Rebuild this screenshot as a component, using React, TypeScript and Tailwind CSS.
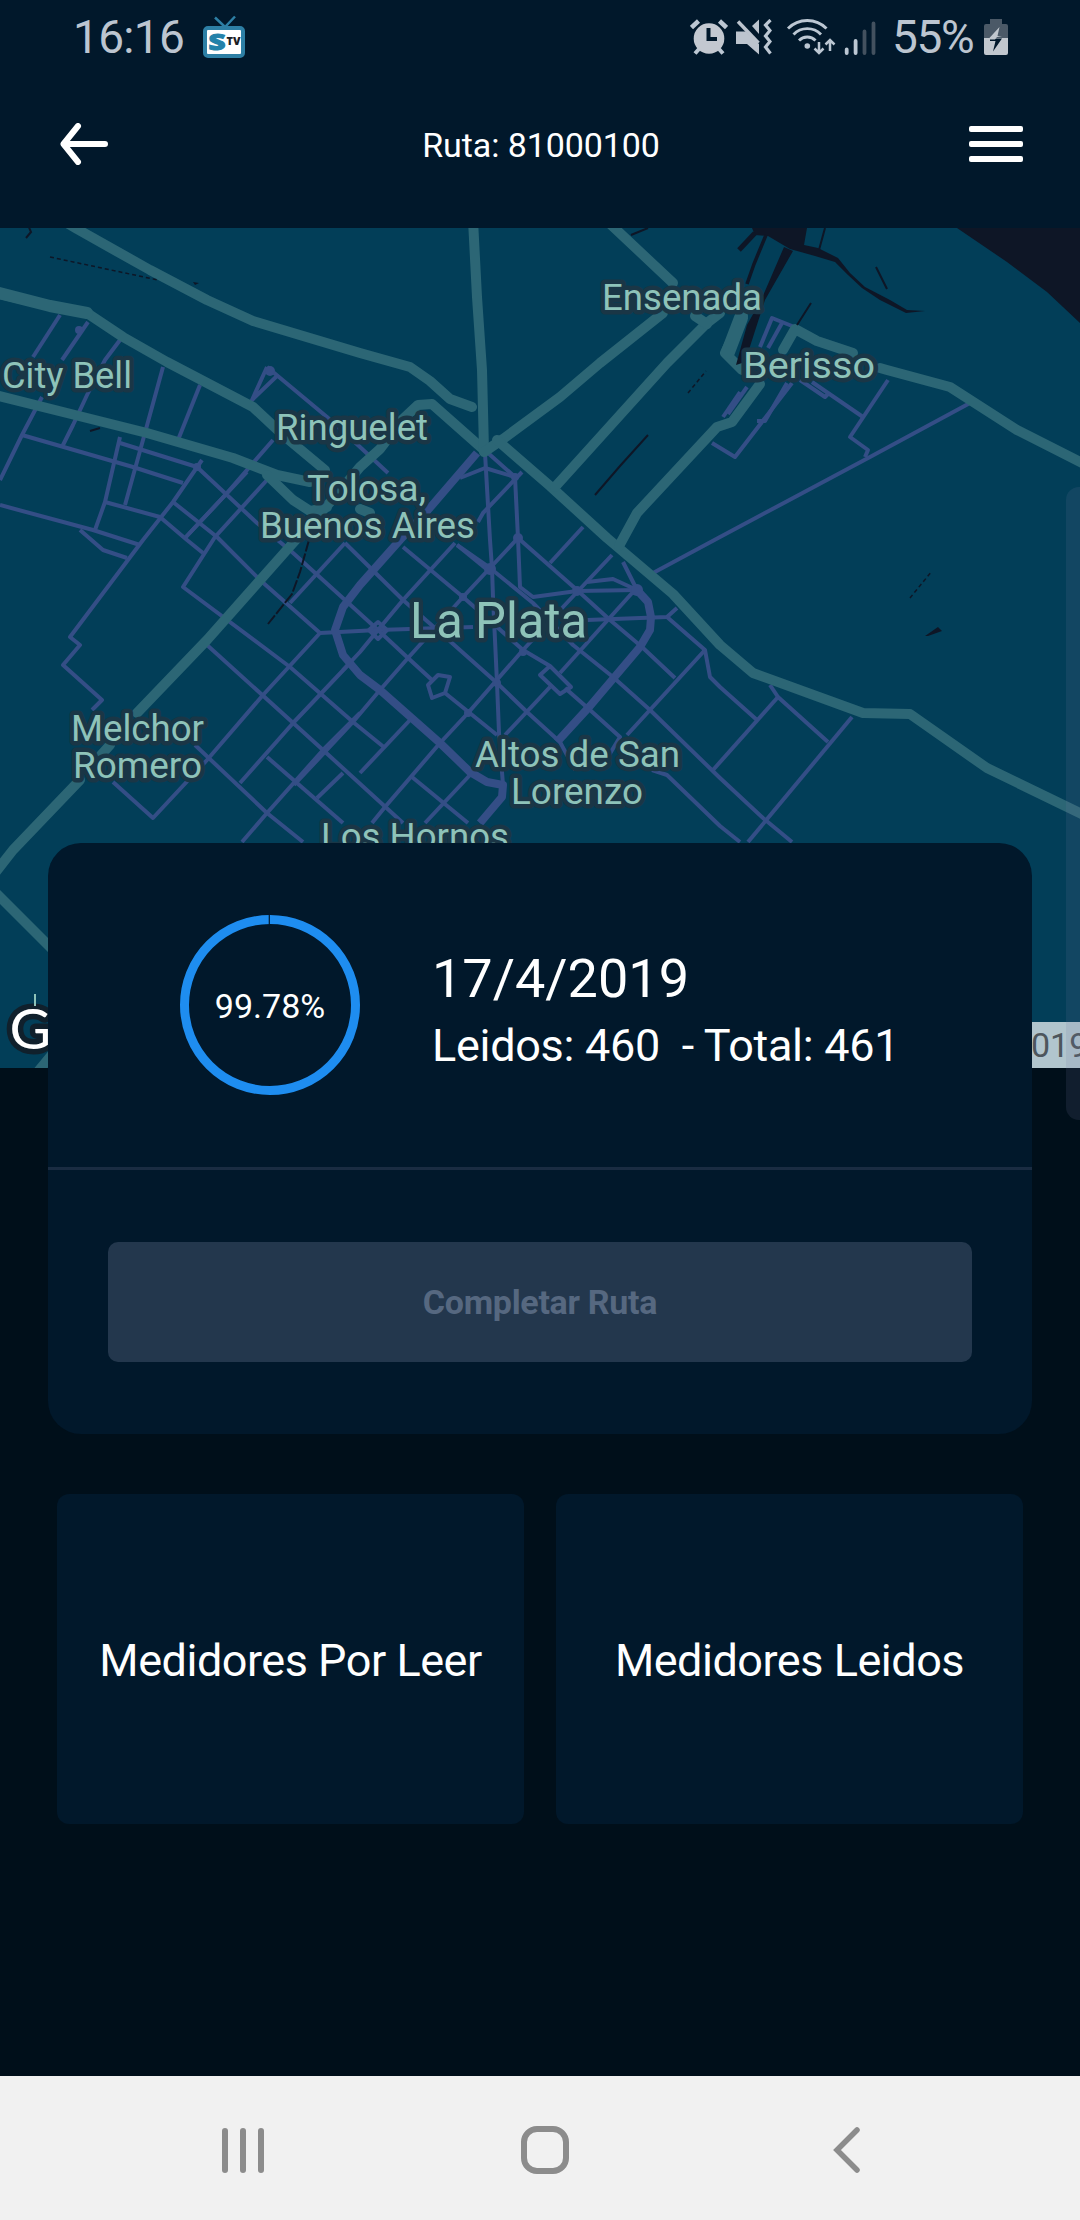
import React from "react";

const highways = [
  "M62 220L77 229L150 270L207 300L253 321L360 353L410 367L430 381L450 399L472 407",
  "M-5 293L50 306L87 313L123 337L167 362L253 407L283 435L325 470",
  "M-5 395L67 413L147 433L233 458L277 475L310 482",
  "M267 475L293 500L310 511L327 507",
  "M484 450L432 404L418 405L402 420L380 449L360 467L345 485L325 508L293 543L207 640L137 713",
  "M110 745L101 755",
  "M80 780L13 850L-5 873",
  "M-5 892L60 957",
  "M36 1074L60 1045",
  "M473 220L477 297L482 370L484 450",
  "M484 452L503 439L560 397L600 363L663 313",
  "M497 440L550 486L607 538L673 594L720 645L753 673L863 713L910 714L987 768L1090 818",
  "M555 487L667 363L707 323L720 313",
  "M606 220L673 283",
  "M695 316L707 324",
  "M743 316L725 353L742 370",
  "M619 546L637 513L717 427L732 422L760 384",
  "M783 350L795 329L817 341L853 353",
  "M880 368L887 370L950 387L1017 430L1090 467",
];

const streets = [
  "M60 315L33 357", "M88 322L62 360", "M120 340L105 360L88 393L73 425L62 447",
  "M163 367L143 440L125 505", "M200 385L178 440", "M42 397L22 435L0 480",
  "M22 435L133 467L183 483", "M0 505L93 530L140 545", "M80 530L103 550L127 558",
  "M120 443L197 467", "M120 437L105 502L95 530", "M105 502L160 517L187 540L203 553",
  "M202 460L173 502L143 540L70 637L80 645L63 665L102 700L92 710",
  "M197 467L257 523L292 552L345 600L378 630L408 658L432 680",
  "M173 502L217 537L260 580L320 633", "M273 440L227 493L185 538",
  "M267 480L215 537L183 587L290 667L353 722L385 748",
  "M247 472L185 538", "M267 367L327 417L360 447L388 473", "M267 367L252 400L278 375",
  "M345 543L290 603", "M345 543L403 600L452 643L497 683L527 712L560 742L575 770",
  "M320 633L263 695L207 760L153 818L113 782", "M320 633L378 630L473 627",
  "M207 645L323 750L403 823", "M195 745L267 813L303 842",
  "M350 663L294 722L240 783", "M360 713L323 750L267 813L242 842",
  "M267 757L343 823", "M343 773L317 798",
  "M403 547L463 597L523 650L550 666", "M565 688L590 710L620 737L600 770",
  "M457 545L490 568L533 603L573 645L613 677L650 710L720 778L763 818L792 842",
  "M455 543L403 600L378 630L360 652L343 670",
  "M518 538L490 568L463 597L408 658L380 690L353 722L294 785",
  "M485 453L490 540L492 568L493 597L497 683L499 733L503 785",
  "M518 538L520 587L533 597L577 591L637 590",
  "M457 545L490 572", "M518 538L577 590L610 620L642 647L675 678",
  "M488 453L515 477L518 538", "M522 472L483 513L478 522",
  "M485 468L515 477", "M485 468L460 478",
  "M583 527L550 563", "M612 555L563 607L523 650L468 713L440 743L385 807L372 823",
  "M623 562L637 590", "M587 582L613 579L637 590", "M633 592L560 673", "M550 687L505 735",
  "M587 620L667 617L677 608", "M445 693L497 735",
  "M410 720L360 773", "M470 775L425 823", "M412 777L468 823",
  "M653 573L720 537L870 457L970 403",
  "M667 617L705 650L627 735", "M705 650L710 677L720 687L757 720",
  "M652 770L667 775L720 826L740 842", "M770 685L778 697L828 742",
  "M778 697L713 770", "M852 717L748 842",
  "M797 328L772 318L760 347", "M740 392L723 417", "M782 323L768 348", "M747 387L728 414",
  "M712 443L735 457L792 383", "M757 421L765 421L787 383",
  "M800 380L825 397L829 393", "M812 382L863 417", "M888 380L850 437L868 450L865 457",
  "M540 675L550 666L571 687L560 694Z", "M428 685L438 675L450 677L445 693L432 698Z",
  "M369 630L378 622L387 630L378 639Z", "M480 823L503 798",
];

const thickStreets = [
  "M477 453L428 510L400 540L360 585L343 607L335 630L343 655L360 675L380 690L440 743L470 772L487 782L503 785L502 797L480 823",
  "M637 590L648 602L651 617L650 630L640 647L590 706L557 742",
];

type MapLabel = { t: string; x: number; y: number; w: number; s?: number };

const labels: MapLabel[] = [
  { t: "City Bell", x: 2, y: 387.5, w: 130 },
  { t: "Ringuelet", x: 276, y: 439.5, w: 152 },
  { t: "Tolosa,", x: 307, y: 500.5, w: 119 },
  { t: "Buenos Aires", x: 260, y: 537.5, w: 215 },
  { t: "Ensenada", x: 602, y: 309.5, w: 160 },
  { t: "Berisso", x: 743, y: 377.5, w: 132 },
  { t: "La Plata", x: 410, y: 638, w: 177, s: 50 },
  { t: "Melchor", x: 71, y: 740.5, w: 133 },
  { t: "Romero", x: 73, y: 777.5, w: 129 },
  { t: "Altos de San", x: 475, y: 766.5, w: 205 },
  { t: "Lorenzo", x: 511, y: 803.5, w: 132 },
  { t: "Los Hornos", x: 321, y: 849, w: 188 },
];

function RouteMap() {
  return (
    <svg viewBox="0 228 1080 840" className="block h-[840px] w-full bg-[#023e58]" fill="none">
      <path d="M957 228L1007 262L1047 292L1080 323V228Z" fill="#0e1626" />
      <g stroke="#344e86" strokeLinejoin="round">
        <g strokeWidth="4">{streets.map((d) => <path key={d} d={d} />)}</g>
        <g strokeWidth="8">{thickStreets.map((d) => <path key={d} d={d} />)}</g>
      </g>
      <g fill="#344e86">
        <circle cx="490" cy="569" r="6" /><circle cx="518" cy="538" r="5" />
        <circle cx="577" cy="591" r="5" /><circle cx="197" cy="467" r="4" />
        <circle cx="79" cy="330" r="4" /><circle cx="270" cy="371" r="5" />
        <circle cx="523" cy="652" r="4" /><circle cx="637" cy="590" r="6" />
        <circle cx="515" cy="477" r="4" /><circle cx="463" cy="597" r="4" />
        <circle cx="497" cy="683" r="4" /><circle cx="468" cy="713" r="4" />
      </g>
      <g stroke="#2c6675" strokeWidth="10" strokeLinejoin="round" strokeLinecap="round">
        {highways.map((d) => <path key={d} d={d} />)}
        <path d="M-5 292L50 306L87 313" strokeWidth="12" />
        <path d="M741 318L728 352" strokeWidth="14" />
        <path d="M360 509L370 513" />
      </g>
      <g fill="#0e1626">
        <path d="M752 228H807L804 245L818 248L838 258L850 273L865 287L890 300L907 310L925 311L906 313L880 300L862 288L848 275L835 262L815 256L790 249L768 236L755 235Z" />
        <path d="M784 247L793 251L765 300L745 362L736 365L747 325L762 298Z" />
        <path d="M193 282l6 1-4 2zM925 636l13-9 4 4-14 5z" />
      </g>
      <g stroke="#0e1626" strokeWidth="2">
        <path d="M755 233L739 250" strokeWidth="5" />
        <path d="M766 235L754 264L747 284" strokeWidth="3.500" />
        <path d="M825 228L819 250M811 303L797 325M876 267L887 289M595 495L620 466L648 435" />
        <path d="M309 540L300 572L292 594L268 624" strokeDasharray="12 2" />
        <path d="M50 257L158 280M910 598L932 571M688 393L706 371" strokeWidth="1.500" strokeDasharray="4 3" />
        <path d="M28 225L31 232L26 238M631 235L648 228M90 431L100 428" />
      </g>
      <g fill="#8ec3b9" stroke="#1a3646" strokeWidth="9" strokeLinejoin="round" className="font-[Roboto,sans-serif] [paint-order:stroke]">
        {labels.map((l) => (
          <text key={l.t} x={l.x} y={l.y} fontSize={l.s ?? 37} textLength={l.w} lengthAdjust="spacingAndGlyphs">{l.t}</text>
        ))}
      </g>
      <text x="9.500" y="1048.500" fontSize="57" fill="#fff" stroke="#10202c" strokeWidth="11" strokeLinejoin="round" className="font-[Lato,sans-serif] [paint-order:stroke]">G</text>
      <path d="M35 994V1006" stroke="#8ec3b9" strokeWidth="2" />
      <rect x="1000" y="1022" width="80" height="46" fill="#b1c5cd" />
      <text x="1031" y="1057" fontSize="34" fill="#4d565c" className="font-[Roboto,sans-serif]">019</text>
    </svg>
  );
}

function TvIcon() {
  return (
    <svg viewBox="203 14 42 44" className="ml-[20px] h-[44px] w-[42px]" fill="none">
      <path d="M215 16.500L225 26L235 15.500" stroke="#2d7fa5" strokeWidth="2.500" />
      <rect x="205" y="27" width="38" height="28" rx="3" fill="#fff" stroke="#2d7fa5" strokeWidth="4" />
      <text x="208.500" y="49" fontSize="22" textLength="17" lengthAdjust="spacingAndGlyphs" fill="#2482aa" stroke="#2482aa" strokeWidth="1" className="font-['Open_Sans',sans-serif] font-extrabold">S</text>
      <text x="226.500" y="44" fontSize="11" textLength="14" lengthAdjust="spacingAndGlyphs" fill="#1b2024" className="font-['Open_Sans',sans-serif] font-extrabold">TV</text>
    </svg>
  );
}

function StatusIcons() {
  return (
    <>
      <svg viewBox="690 18 38 36" className="h-[36px] w-[38px]" fill="none" stroke="#bcc7d3">
        <path d="M691.500 26.500L698.500 20M726.500 26.500L719.500 20" strokeWidth="4.500" />
        <path d="M699 48L695 52.500M719 48L723 52.500" strokeWidth="4" />
        <circle cx="709" cy="37.500" r="15.300" fill="#c3c8d0" stroke="none" />
        <path d="M708.500 27V38H717" stroke="#01182b" strokeWidth="4" />
      </svg>
      <svg viewBox="736 18 36 36" className="ml-2 h-[36px] w-[36px]" fill="#bcc4ce">
        <path d="M736 30.500H746L759 43V53.500L747 43H736Z" />
        <path d="M752 25L759 18.500V33Z" />
        <path d="M738 20.500L758.500 42" stroke="#bcc4ce" strokeWidth="3.500" />
        <path d="M770.500 19L765.500 24L770 29.500L765.500 35L770 40.500L765.500 46L770.500 52.500" fill="none" stroke="#bcc7d3" strokeWidth="3.200" />
      </svg>
      <svg viewBox="786 16 50 40" className="ml-[14px] h-[40px] w-[50px]" fill="none" stroke="#bcc7d3" strokeWidth="2.900">
        <path d="M788 27.500A27 27 0 0 1 826.500 27.500M793.500 33.500A19 19 0 0 1 821 33.500M799 39.500A11.500 11.500 0 0 1 815.500 39.500" />
        <circle cx="807.300" cy="45" r="2.800" fill="#bcc7d3" stroke="none" />
        <path d="M819 41V51.500M814.500 47.500L819 52L823.500 47.500M830 50V39.500M825.500 43.500L830 39L834.500 43.500" strokeWidth="2.500" />
      </svg>
      <svg viewBox="844 18 33 37" className="ml-2 h-[37px] w-[33px]" strokeLinecap="round" strokeWidth="3.800">
        <path d="M846.700 48.500V52M855.600 40V52" stroke="#bcc7d3" />
        <path d="M864.500 30.500V52M873.500 22.500V52" stroke="#43515f" />
      </svg>
      <span className="ml-[15px] w-[80px] text-[46px] leading-none tracking-[-1.400px] whitespace-nowrap">55%</span>
      <svg viewBox="983 18 24 36" className="ml-[12px] h-[36px] w-[24px]">
        <path d="M989 18H1001V23H1005Q1007 23 1007 25V37H983V25Q983 23 985 23H989Z" fill="#4b5967" />
        <path d="M983 37H1007V52Q1007 54 1005 54H985Q983 54 983 52Z" fill="#c1c7ce" />
        <path d="M989 37.500H1001L992 50.500L994.500 40H989Z" fill="#01182b" />
        <path d="M998.500 26L987 38.500H994L996 36H1001L996.500 35Z" fill="#c1c7ce" />
      </svg>
    </>
  );
}

export default function App() {
  return (
    <div className="relative flex h-[2220px] w-[1080px] flex-col overflow-hidden bg-[#000f1a] font-[Roboto,sans-serif] text-white">
      <div className="flex h-[72px] items-center bg-[#01182b] pt-[2px] pr-[72px] pl-[73px] text-[#bcc5d0]">
        <span className="w-[110px] text-[46px] leading-none tracking-[-0.700px]">16:16</span>
        <TvIcon />
        <div className="ml-auto flex items-center">
          <StatusIcons />
        </div>
      </div>

      <header className="flex h-[156px] items-center justify-between bg-[#01182b] pr-[57px] pb-[12px] pl-[60px]">
        <svg viewBox="0 0 48 42" className="h-[42px] w-[48px]" fill="none" stroke="#fff" strokeWidth="6" strokeLinecap="round" strokeLinejoin="round">
          <path d="M45 21H4M18 3L3.500 21L18 39" />
        </svg>
        <h1 className="mt-[2px] ml-[5px] text-[34px] leading-none tracking-[-0.100px]">Ruta: 81000100</h1>
        <div className="flex w-[54px] flex-col gap-[9px]">
          <span className="h-[6px] rounded-[2px] bg-white" />
          <span className="h-[6px] rounded-[2px] bg-white" />
          <span className="h-[6px] rounded-[2px] bg-white" />
        </div>
      </header>

      <RouteMap />

      <section className="relative z-10 mx-[48px] -mt-[225px] flex h-[591px] flex-col rounded-[33px] bg-[#01182b]">
        <div className="flex h-[327px] items-center border-b-[3px] border-[#1a2c42] pl-[132px]">
          <div className="grid h-[180px] w-[180px] place-items-center">
            <svg viewBox="0 0 180 180" className="col-start-1 row-start-1 h-[180px] w-[180px]" fill="none">
              <circle cx="90" cy="90" r="85.500" stroke="#1e8df0" strokeWidth="9" />
              <path d="M89.300 0V9" stroke="#01182b" strokeWidth="1.200" />
            </svg>
            <span className="col-start-1 row-start-1 mt-[2px] text-[34px] leading-none">99.78%</span>
          </div>
          <div className="mt-[10px] ml-[72px] flex flex-col gap-[17px]">
            <span className="text-[54px] leading-none">17/4/2019</span>
            <span className="text-[45px] leading-none tracking-[-0.300px] whitespace-pre">Leidos: 460  - Total: 461</span>
          </div>
        </div>
        <div className="flex flex-1 items-center px-[60px]">
          <button className="h-[120px] w-full rounded-[10px] bg-[#23374d] text-[34px] font-bold tracking-[-0.300px] text-[#566880]">Completar Ruta</button>
        </div>
      </section>

      <div className="mt-[60px] grid h-[330px] grid-cols-2 gap-[32px] px-[57px] text-[45px] tracking-[-0.480px]">
        <button className="rounded-[12px] bg-[#01182b] pt-[4px]">Medidores Por Leer</button>
        <button className="rounded-[12px] bg-[#01182b] pt-[4px]">Medidores Leidos</button>
      </div>

      <div className="absolute top-[487px] right-0 z-20 h-[633px] w-[14px] rounded-l-[13px] bg-[#7078a0]/15" />

      <nav className="mt-auto flex h-[144px] items-center bg-[#f1f1f1] pt-[4px] pl-[222px]">
        <div className="flex h-[45px] w-[42px] justify-between">
          <span className="w-[6px] rounded-full bg-[#8c8c8c]" />
          <span className="w-[6px] rounded-full bg-[#8c8c8c]" />
          <span className="w-[6px] rounded-full bg-[#8c8c8c]" />
        </div>
        <div className="ml-[257px] h-[48px] w-[48px] rounded-[16px] border-[6px] border-[#8c8c8c]" />
        <svg viewBox="0 0 28 46" className="ml-[264px] h-[46px] w-[28px]" fill="none" stroke="#8c8c8c" strokeWidth="5.500" strokeLinecap="round">
          <path d="M24 3L4 23L24 43" strokeLinejoin="miter" />
        </svg>
      </nav>
    </div>
  );
}
